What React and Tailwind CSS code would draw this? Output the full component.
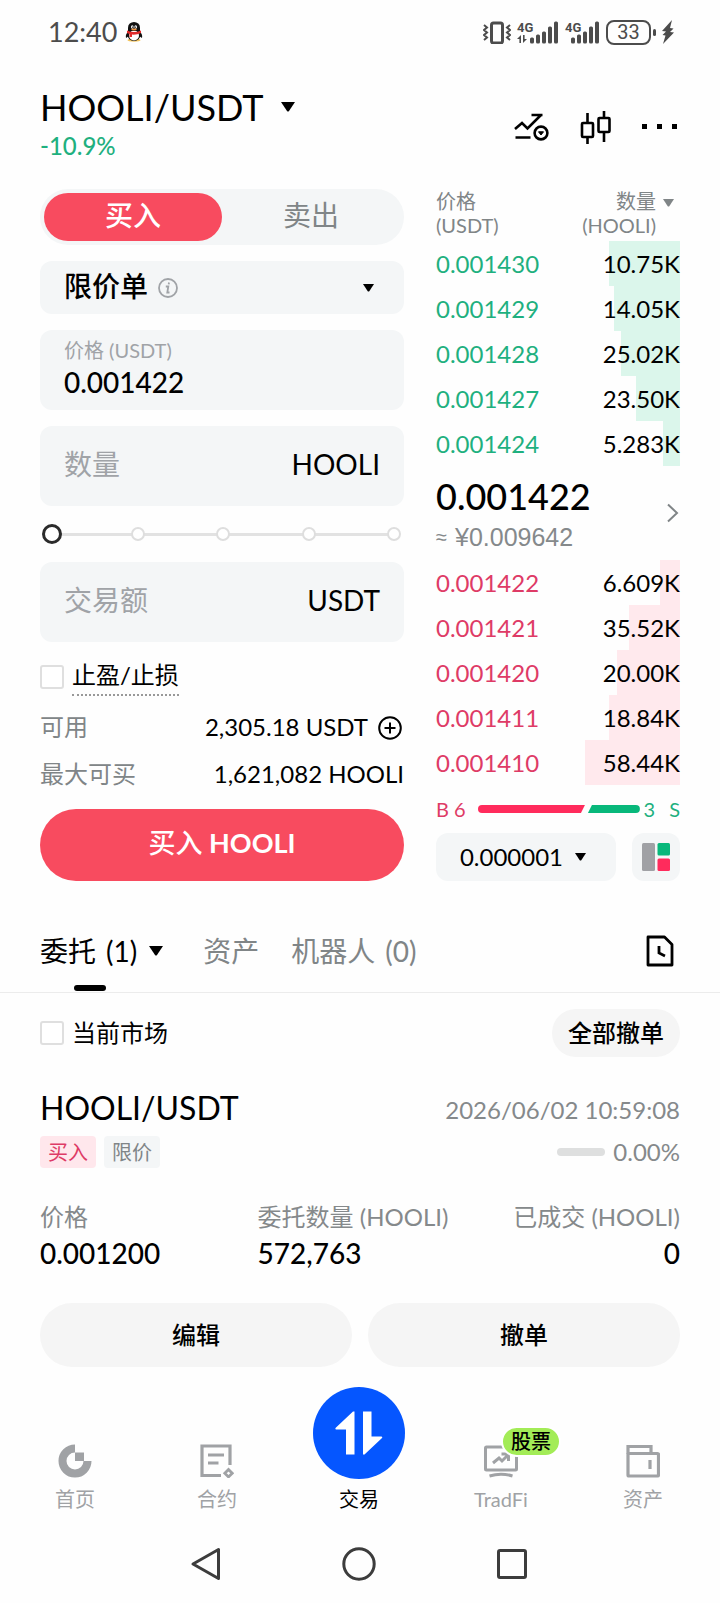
import React, { useState } from "react";
import clsx from "clsx";

const asks = [
  { price: "0.001430", amount: "10.75K", depth: 29 },
  { price: "0.001429", amount: "14.05K", depth: 27 },
  { price: "0.001428", amount: "25.02K", depth: 24 },
  { price: "0.001427", amount: "23.50K", depth: 18 },
  { price: "0.001424", amount: "5.283K", depth: 7 },
];

const bids = [
  { price: "0.001422", amount: "6.609K", depth: 8 },
  { price: "0.001421", amount: "35.52K", depth: 21 },
  { price: "0.001420", amount: "20.00K", depth: 26 },
  { price: "0.001411", amount: "18.84K", depth: 29 },
  { price: "0.001410", amount: "58.44K", depth: 39 },
];

function Caret({ className }) {
  return (
    <svg viewBox="0 0 14 10" className={className} fill="currentColor" aria-hidden="true">
      <path d="M0 0H14L8 9Q7 10 6 9Z" />
    </svg>
  );
}

function SignalBars({ start, arrows }) {
  return (
    <svg
      width={start + 29}
      height="26"
      viewBox={`0 0 ${start + 29} 26`}
      fill="currentColor"
      className="overflow-visible"
      aria-hidden="true"
    >
      <text x="0" y="13" fontSize="13" fontWeight="700" fontFamily="Roboto, sans-serif">
        4G
      </text>
      {arrows && <path d="M0 20L4 16V24H2.400V20ZM6 16H7.600V20H10L6 24Z" />}
      {[6, 9, 12, 17, 22].map((h, i) => (
        <rect key={h} x={start + i * 6} y={24.500 - h} width="4" height={h} rx="1.500" />
      ))}
    </svg>
  );
}

function StatusBar() {
  return (
    <div className="flex h-16 items-center justify-between pl-12 pr-[46px] text-[#4c4c4c]">
      <div className="flex items-center gap-2">
        <span className="text-[27px] leading-8">12:40</span>
        <svg width="18" height="20" viewBox="0 0 18 20" aria-hidden="true">
          <ellipse cx="9" cy="18.200" rx="6.500" ry="1.600" fill="#f3c35a" />
          <path d="M1 16Q0 12 4 9H14Q18 12 17 16L14 14H4Z" fill="#111" />
          <ellipse cx="9" cy="13" rx="6.500" ry="6" fill="#111" />
          <ellipse cx="9" cy="13.500" rx="5" ry="5" fill="#fff" />
          <path d="M3 9V5.500A6 5.500 0 0 1 15 5.500V9Z" fill="#111" />
          <ellipse cx="7.300" cy="5" rx="1.300" ry="1.700" fill="#fff" />
          <ellipse cx="10.700" cy="5" rx="1.300" ry="1.700" fill="#fff" />
          <circle cx="7.600" cy="5.200" r="0.600" fill="#111" />
          <circle cx="10.400" cy="5.200" r="0.600" fill="#111" />
          <ellipse cx="9" cy="7.600" rx="2.800" ry="1" fill="#f0923a" />
          <path d="M2 8.500Q9 11.500 16 8.500V11Q12 13 7 12.600V15H4.500V12Q3 11.500 2 11Z" fill="#e02b2b" />
        </svg>
      </div>
      <div className="flex items-center gap-[6px]">
        <svg width="28" height="24" viewBox="0 0 28 24" fill="none" stroke="currentColor" aria-hidden="true">
          <rect x="8.500" y="3" width="11" height="20" rx="2" strokeWidth="3" />
          <path d="M1 5L4 7.500L1 10L4 12.500L1 15L4 17.500L1 20M27 5L24 7.500L27 10L24 12.500L27 15L24 17.500L27 20" strokeWidth="2" />
        </svg>
        <SignalBars start={13} arrows />
        <SignalBars start={6} />
        <div className="flex items-center gap-[2px]">
          <span className="flex h-[25px] w-[45px] items-center justify-center rounded-lg border-2 border-current font-[Roboto] text-[20px] leading-5">
            33
          </span>
          <span className="h-[7px] w-[3px] rounded-full bg-current" />
        </div>
        <svg width="12" height="24" viewBox="0 0 12 24" fill="currentColor" aria-hidden="true">
          <path d="M10 0L0 11L4 11.500L0.500 15L3.500 15.500L1 24L12 12.500L8 12L11.500 8.500L8 8Z" />
        </svg>
      </div>
    </div>
  );
}

function Header() {
  return (
    <header className="flex items-center justify-between px-10 pb-[27px] pt-5">
      <div>
        <h1>
          <button className="flex items-center gap-[18px] text-[36px] leading-[46px]">
            HOOLI/USDT
            <Caret className="h-[10px] w-[14px]" />
          </button>
        </h1>
        <p className="text-[24px] font-medium leading-8 text-[#1fb07f]">-10.9%</p>
      </div>
      <div className="flex items-center gap-[30px] pt-2">
        <button aria-label="行情">
          <svg width="36" height="30" viewBox="0 0 36 30" fill="none" stroke="currentColor" strokeWidth="2.600">
            <path d="M1 17L8 11L13.500 16.500L27 3M17.500 3H28.500M1.500 25.500H16.500" />
            <circle cx="27" cy="21" r="6.400" />
            <path d="M24.500 19.800H29.500L27 23Z" fill="currentColor" strokeWidth="1" />
          </svg>
        </button>
        <button aria-label="K线">
          <svg width="32" height="34" viewBox="0 0 32 34" fill="none" stroke="currentColor" strokeWidth="2.600">
            <rect x="2" y="13" width="11" height="14" rx="1" />
            <rect x="18.500" y="8" width="11" height="14" rx="1" />
            <path d="M7.500 3V13M7.500 27V34M24 1V8M24 22V32" />
          </svg>
        </button>
        <button aria-label="更多">
          <svg width="38" height="6" viewBox="0 0 38 6" fill="currentColor">
            <path d="M0 0H5V5H0ZM15 0H20V5H15ZM30 0H35V5H30Z" />
          </svg>
        </button>
      </div>
    </header>
  );
}

function Checkbox({ id }) {
  return (
    <input
      id={id}
      type="checkbox"
      className="size-6 appearance-none rounded-[3px] border-2 border-[#dfdfdf] bg-white checked:bg-black"
    />
  );
}

function PercentSlider() {
  const [percent, setPercent] = useState(0);

  return (
    <div className="relative flex h-14 items-center pl-[2px]">
      <div className="absolute left-3 right-3 h-[3px] bg-[#e2e2e2]" />
      <div className="relative flex w-full justify-between">
        {[0, 25, 50, 75, 100].map((step) => (
          <span key={step} className="flex size-5 items-center justify-center">
            <span
              className={clsx(
                "rounded-full bg-white",
                step === percent
                  ? "size-5 shrink-0 border-3 border-[#2b2b2b]"
                  : "size-[14px] border-2 border-[#dedede]"
              )}
            />
          </span>
        ))}
      </div>
      <input
        type="range"
        min="0"
        max="100"
        step="25"
        value={percent}
        onChange={(e) => setPercent(Number(e.target.value))}
        aria-label="仓位百分比"
        className="absolute inset-0 w-full opacity-0"
      />
    </div>
  );
}

function OrderForm() {
  const [side, setSide] = useState("buy");
  const [price, setPrice] = useState("0.001422");

  return (
    <form className="min-w-0 flex-[364]" onSubmit={(e) => e.preventDefault()}>
      <div className="flex h-14 rounded-full bg-[#f4f6f7] p-1 text-[28px] leading-8">
        <button
          type="button"
          onClick={() => setSide("buy")}
          className={clsx(
            "flex-1 rounded-full pb-1",
            side === "buy" ? "bg-[#f84b5f] font-medium text-white" : "text-[#808587]"
          )}
        >
          买入
        </button>
        <button
          type="button"
          onClick={() => setSide("sell")}
          className={clsx(
            "flex-1 rounded-full pb-1",
            side === "sell" ? "bg-[#08b87b] font-medium text-white" : "text-[#808587]"
          )}
        >
          卖出
        </button>
      </div>

      <div className="mt-4 flex h-[53px] items-center rounded-xl bg-[#f4f6f7] px-6">
        <select
          aria-label="委托类型"
          className="field-sizing-content appearance-none bg-transparent pb-1 text-[28px] font-medium leading-10"
        >
          <option>限价单</option>
          <option>市价单</option>
        </select>
        <svg
          viewBox="0 0 20 20"
          className="ml-[10px] size-5 text-[#a0a3a7]"
          fill="none"
          stroke="currentColor"
          strokeWidth="1.800"
          aria-hidden="true"
        >
          <circle cx="10" cy="10" r="9" />
          <path d="M7.800 8.500H10.300L9.300 14.500H11.500M11 4.500L10.700 6.300" />
        </svg>
        <Caret className="ml-auto mr-[6px] h-2 w-[11px]" />
      </div>

      <div className="mt-4 flex h-20 flex-col rounded-xl bg-[#f4f6f7] px-6 pt-1">
        <label htmlFor="price" className="text-[20px] leading-8 text-[#a0a3a7]">
          价格 (USDT)
        </label>
        <input
          id="price"
          value={price}
          onChange={(e) => setPrice(e.target.value)}
          className="h-8 w-full bg-transparent text-[28px] font-medium leading-8 outline-none"
        />
      </div>

      <div className="mt-4 flex h-20 items-center rounded-xl bg-[#f4f6f7] px-6 pb-1 text-[28px] leading-10">
        <input
          id="amount"
          placeholder="数量"
          className="h-10 min-w-0 flex-1 bg-transparent outline-none placeholder:text-[#a0a3a7]"
        />
        <label htmlFor="amount">HOOLI</label>
      </div>

      <PercentSlider />

      <div className="flex h-20 items-center rounded-xl bg-[#f4f6f7] px-6 pb-1 text-[28px] leading-10">
        <input
          id="total"
          placeholder="交易额"
          className="h-10 min-w-0 flex-1 bg-transparent outline-none placeholder:text-[#a0a3a7]"
        />
        <label htmlFor="total">USDT</label>
      </div>

      <div className="mt-[11px] flex h-12 items-center gap-2">
        <Checkbox id="tpsl" />
        <label
          htmlFor="tpsl"
          className="border-b-2 border-dotted border-[#999] pb-[3px] text-[24px] leading-8"
        >
          止盈/止损
        </label>
      </div>
      <div className="flex h-[51px] items-center text-[24px] leading-8">
        <span className="mr-auto text-[#808587]">可用</span>
        <span>2,305.18 USDT</span>
        <button type="button" aria-label="充值" className="ml-[10px] mr-[2px] pt-[2px]">
          <svg width="24" height="24" viewBox="0 0 24 24" fill="none" stroke="currentColor" strokeWidth="2">
            <circle cx="12" cy="12" r="10.800" />
            <path d="M12 6.500V17.500M6.500 12H17.500" />
          </svg>
        </button>
      </div>
      <div className="flex h-11 items-center justify-between text-[24px] leading-8">
        <span className="text-[#808587]">最大可买</span>
        <span>1,621,082 HOOLI</span>
      </div>
      <button
        type="submit"
        className="mt-[13px] h-[72px] w-full rounded-full bg-[#f84b5f] pb-1 text-[27px] font-bold leading-8 text-white"
      >
        <span className="font-medium">买入</span> HOOLI
      </button>
    </form>
  );
}

function BookRows({ rows, type }) {
  return (
    <tbody>
      {rows.map((row) => (
        <tr key={row.price} className="relative h-[45px] text-[24px] leading-8">
          <td className={clsx("p-0", type === "ask" ? "text-[#1fb07f]" : "text-[#de3b66]")}>
            {row.price}
          </td>
          <td className="p-0 text-right">
            <span
              className={clsx(
                "absolute inset-y-0 right-0",
                type === "ask" ? "bg-[#dbf6eb]" : "bg-[#ffe9ed]"
              )}
              style={{ width: `${row.depth}%` }}
            />
            <span className="relative">{row.amount}</span>
          </td>
        </tr>
      ))}
    </tbody>
  );
}

function OrderBook() {
  return (
    <section className="min-w-0 flex-[244]">
      <table className="w-full border-collapse">
        <thead>
          <tr className="h-[52px] align-top text-[20px] leading-6 text-[#808587]">
            <th className="p-0 text-left font-normal">
              价格
              <br />
              (USDT)
            </th>
            <th className="p-0 font-normal">
              <div className="flex justify-end pr-[6px] text-right">
                <span>
                  数量
                  <br />
                  (HOOLI)
                </span>
                <Caret className="ml-[7px] mt-[10px] h-2 w-[11px]" />
              </div>
            </th>
          </tr>
        </thead>
        <BookRows rows={asks} type="ask" />
      </table>

      <button className="flex w-full items-center justify-between pb-1 pt-2 text-left">
        <span>
          <span className="block text-[36px] font-medium leading-[44px]">0.001422</span>
          <span className="flex gap-2 font-['Liberation_Sans'] text-[25px] leading-[38px] text-[#85898b]">
            <span className="text-[20px]">≈</span>
            <span>¥0.009642</span>
          </span>
        </span>
        <svg width="14" height="20" viewBox="0 0 14 20" fill="none" stroke="#808587" strokeWidth="2" className="mb-1" aria-hidden="true">
          <path d="M2 1.500L11 10L2 18.500" />
        </svg>
      </button>

      <table className="w-full border-collapse">
        <BookRows rows={bids} type="bid" />
      </table>

      <div className="flex h-12 items-center text-[20px] leading-6">
        <span className="text-[#de3b66]">B 6</span>
        <svg viewBox="0 0 162 8" className="ml-3 h-2 min-w-0 flex-1" aria-hidden="true">
          <path d="M4 0H107L103 8H4A4 4 0 0 1 4 0Z" fill="#ff2b5c" />
          <path d="M114 0H158A4 4 0 0 1 158 8H110Z" fill="#08b87b" />
        </svg>
        <span className="ml-1 text-[#1fb07f]">3</span>
        <span className="ml-[14px] text-[#1fb07f]">S</span>
      </div>

      <div className="flex h-12 gap-4">
        <div className="flex min-w-0 flex-1 items-center justify-center gap-3 rounded-xl bg-[#f4f6f7] pr-[6px]">
          <select
            aria-label="价格精度"
            className="field-sizing-content appearance-none bg-transparent text-[24px] leading-8"
          >
            <option>0.000001</option>
            <option>0.00001</option>
          </select>
          <Caret className="h-2 w-[11px]" />
        </div>
        <button aria-label="盘口样式" className="flex size-12 items-center justify-center rounded-xl bg-[#f4f6f7]">
          <svg width="28" height="28" viewBox="0 0 28 28">
            <rect width="13" height="28" rx="1.500" fill="#a0a1a5" />
            <rect x="15.500" width="12.500" height="12.500" rx="1.500" fill="#08b87b" />
            <rect x="15.500" y="15.500" width="12.500" height="12.500" rx="1.500" fill="#ff2b5c" />
          </svg>
        </button>
      </div>
    </section>
  );
}

function OrderTabs() {
  return (
    <div className="mt-8 flex h-20 items-center border-b border-[#ececec] px-10 pb-1 text-[28px] leading-10">
      <button className="relative flex items-center">
        委托
        <span className="ml-[10px]">(1)</span>
        <Caret className="ml-3 h-[10px] w-[14px]" />
        <span className="absolute -bottom-5 left-[34px] h-[6px] w-8 rounded-full bg-black" />
      </button>
      <button className="ml-10 text-[#808587]">资产</button>
      <button className="ml-8 flex text-[#808587]">
        机器人
        <span className="ml-[10px]">(0)</span>
      </button>
      <button aria-label="历史委托" className="ml-auto mr-[6px]">
        <svg width="28" height="32" viewBox="0 0 28 32" fill="none" stroke="currentColor" strokeWidth="2.800">
          <path d="M2 2H18.500L26 9.500V30H2Z" strokeLinejoin="round" />
          <path d="M13 11V18L19 21" />
        </svg>
      </button>
    </div>
  );
}

function OpenOrders() {
  return (
    <section className="px-10 pt-4">
      <div className="flex items-center gap-2 text-[24px] leading-8">
        <Checkbox id="current" />
        <label htmlFor="current">当前市场</label>
        <button className="ml-auto h-12 rounded-full bg-[#f5f5f5] px-4 font-medium">全部撤单</button>
      </div>

      <div className="mt-[31px] flex items-center justify-between">
        <h2 className="text-[32px] leading-10">HOOLI/USDT</h2>
        <time className="pt-1 text-[24px] leading-9 text-[#85898b]">2026/06/02 10:59:08</time>
      </div>
      <div className="mt-2 flex items-center gap-2 text-[20px] leading-8">
        <span className="rounded-sm bg-[#ffe7ec] px-2 text-[#de3b66]">买入</span>
        <span className="rounded-sm bg-[#f4f6f7] px-2 text-[#808587]">限价</span>
        <span className="ml-auto h-2 w-12 rounded-full bg-[#dedfdf]" />
        <span className="text-[24px] text-[#85898b]">0.00%</span>
      </div>

      <dl className="mt-[31px] flex text-[28px] font-medium leading-9 [&_dt]:text-[24px] [&_dt]:font-normal [&_dt]:text-[#85898b]">
        <div className="w-[34%]">
          <dt>价格</dt>
          <dd>0.001200</dd>
        </div>
        <div>
          <dt>委托数量 (HOOLI)</dt>
          <dd>572,763</dd>
        </div>
        <div className="ml-auto text-right">
          <dt>已成交 (HOOLI)</dt>
          <dd>0</dd>
        </div>
      </dl>

      <div className="mt-8 flex gap-4 text-[24px] font-medium leading-8">
        <button className="h-16 flex-1 rounded-full bg-[#f5f5f5]">编辑</button>
        <button className="h-16 flex-1 rounded-full bg-[#f5f5f5]">撤单</button>
      </div>
    </section>
  );
}

function NavItem({ label, children }) {
  return (
    <a href="#" className="flex flex-1 flex-col items-center">
      <span className="relative mb-[6px] flex h-9 items-center">{children}</span>
      {label}
    </a>
  );
}

function BottomNav() {
  return (
    <nav className="mt-[49px] flex h-[108px] items-end pb-[11px] pl-1 pr-[6px] text-[20px] leading-7 text-[#a0a2a5]">
      <NavItem label="首页">
        <svg width="34" height="34" viewBox="0 0 34 34" fill="none">
          <path d="M17 4.500A12.500 12.500 0 1 0 29.500 17" stroke="currentColor" strokeWidth="8" />
          <rect x="17" y="8.500" width="9" height="8.500" fill="currentColor" />
        </svg>
      </NavItem>
      <NavItem label="合约">
        <svg width="34" height="34" viewBox="0 0 34 34" fill="none" stroke="currentColor" strokeWidth="3.200">
          <path d="M21 31.500H2V2H30V21" />
          <path d="M8 11H24M8 19H18.500" />
          <path d="M28.500 25.500L32.200 29.200L28.500 32.900L24.800 29.200Z" strokeWidth="2.800" />
        </svg>
      </NavItem>
      <a href="#" className="flex flex-1 flex-col items-center text-black">
        <span className="mb-[6px] flex size-[92px] shrink-0 items-center justify-center rounded-full bg-[#0556ff]">
          <svg width="48" height="44" viewBox="0 0 48 44" fill="#fff">
            <path d="M0.500 17L18 0.500H19.500V43.500H11V18.500H1Q0 18 0.500 17Z" />
            <path d="M28 0.500H36.500V25.500H46.500Q48 26 47 27L29.500 43.500H28Z" />
          </svg>
        </span>
        交易
      </a>
      <NavItem label="TradFi">
        <svg width="34" height="34" viewBox="0 0 34 34" fill="none" stroke="currentColor" strokeWidth="3">
          <rect x="1.500" y="3" width="31" height="23" rx="1" />
          <path d="M9 19L15 14L18 17L24 11M17.500 10H24.500V17" />
          <path d="M5.500 32Q17 28.500 28.500 32" />
        </svg>
        <span className="absolute -top-[17px] left-[17px] box-content whitespace-nowrap rounded-full border-2 border-white bg-[#a3ec57] px-2 text-[20px] font-medium leading-[27px] text-black">
          股票
        </span>
      </NavItem>
      <NavItem label="资产">
        <svg width="34" height="34" viewBox="0 0 34 34" fill="none" stroke="currentColor" strokeWidth="3.200">
          <rect x="2" y="9.500" width="30.500" height="22.500" rx="1" />
          <path d="M2 10V2.500H25V9.500M24 16V25" />
        </svg>
      </NavItem>
    </nav>
  );
}

function SystemNav() {
  return (
    <div className="flex h-[79px] items-center justify-center gap-[120px] pr-[2px]">
      <button aria-label="返回">
        <svg width="32" height="36" viewBox="0 0 32 36" fill="none" stroke="#3c3c3c" strokeWidth="3">
          <path d="M28.500 3.500V32.500L3 18Z" strokeLinejoin="round" />
        </svg>
      </button>
      <button aria-label="主屏幕">
        <svg width="34" height="34" viewBox="0 0 34 34" fill="none" stroke="#3c3c3c" strokeWidth="3">
          <circle cx="17" cy="17" r="15.200" />
        </svg>
      </button>
      <button aria-label="最近任务">
        <svg width="32" height="32" viewBox="0 0 32 32" fill="none" stroke="#3c3c3c" strokeWidth="3">
          <rect x="2.500" y="2.500" width="27" height="27" rx="1.500" />
        </svg>
      </button>
    </div>
  );
}

export default function App() {
  return (
    <div className="bg-[#fefefe] font-[Lato,'Noto_Sans_CJK_SC',sans-serif] text-black">
      <StatusBar />
      <Header />
      <main>
        <div className="flex gap-8 px-10">
          <OrderForm />
          <OrderBook />
        </div>
        <OrderTabs />
        <OpenOrders />
      </main>
      <BottomNav />
      <SystemNav />
    </div>
  );
}
